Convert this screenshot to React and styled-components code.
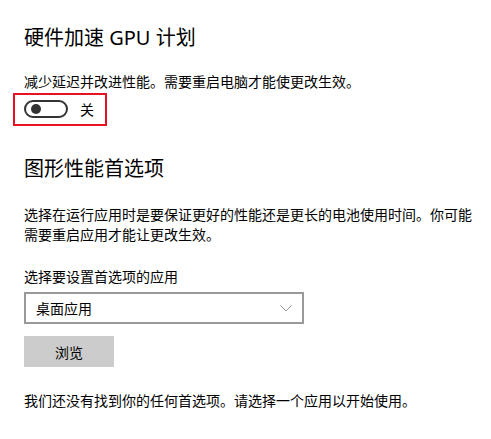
import React from "react";
import styled, { createGlobalStyle } from "styled-components";

const Global = createGlobalStyle`
  html, body { margin: 0; padding: 0; background: #fff; }
  body { font-family: "Microsoft YaHei", "Noto Sans CJK SC", sans-serif; color: #000; }
`;

const Page = styled.div`
  padding: 24px 0 0 24px;
  width: 491px;
  box-sizing: border-box;
`;

const Title = styled.h2`
  margin: 0;
  font-size: 20px;
  font-weight: 400;
  line-height: 28px;
  font-family: "Segoe UI", "Noto Sans", "Noto Sans CJK SC", sans-serif;
  margin-top: ${p => p.$top || 0}px;
`;

const Text = styled.p`
  margin: 0;
  font-size: 14px;
  line-height: 20px;
  margin-top: ${p => p.$top || 0}px;
  margin-right: ${p => p.$right || 0}px;
`;

const Highlight = styled.div`
  display: inline-flex;
  align-items: center;
  gap: 12px;
  margin: 2px 0 0 -11px;
  padding: 5px 11px 6px 9px;
  border: 2px solid #e81123;
  width: 94px;
  box-sizing: border-box;
  height: 33px;
`;

const Toggle = styled.div`
  width: 44px;
  height: 18px;
  border: 2px solid #333;
  border-radius: 10px;
  box-sizing: border-box;
  display: flex;
  align-items: center;
  padding-left: 5px;
  flex-shrink: 0;
`;

const Knob = styled.div`
  width: 10px;
  height: 10px;
  border-radius: 50%;
  background: #333;
`;

const ToggleLabel = styled.span`
  font-size: 14px;
  line-height: 20px;
`;

const Select = styled.div`
  margin-top: 6px;
  width: 280px;
  height: 32px;
  box-sizing: border-box;
  border: 2px solid #999;
  display: flex;
  align-items: center;
  justify-content: space-between;
  padding: 0 10px 0 10px;
  font-size: 14px;
`;

const Button = styled.div`
  margin-top: 12px;
  width: 90px;
  height: 31px;
  background: #ccc;
  display: flex;
  align-items: center;
  justify-content: center;
  font-size: 14px;
`;

const Chevron = () => (
  <svg width="12" height="7" viewBox="0 0 12 7" fill="none">
    <path d="M0.5 0.5 L6 6 L11.5 0.5" stroke="#999" strokeWidth="1" />
  </svg>
);

export default function App() {
  return (
    <Page>
      <Global />
      <Title>硬件加速 GPU 计划</Title>
      <Text $top={19}>减少延迟并改进性能。需要重启电脑才能使更改生效。</Text>
      <Highlight>
        <Toggle><Knob /></Toggle>
        <ToggleLabel>关</ToggleLabel>
      </Highlight>
      <Title $top={29}>图形性能首选项</Title>
      <Text $top={21} $right={10}>选择在运行应用时是要保证更好的性能还是更长的电池使用时间。你可能需要重启应用才能让更改生效。</Text>
      <Text $top={22}>选择要设置首选项的应用</Text>
      <Select>
        <span>桌面应用</span>
        <Chevron />
      </Select>
      <Button>浏览</Button>
      <Text $top={23}>我们还没有找到你的任何首选项。请选择一个应用以开始使用。</Text>
    </Page>
  );
}
